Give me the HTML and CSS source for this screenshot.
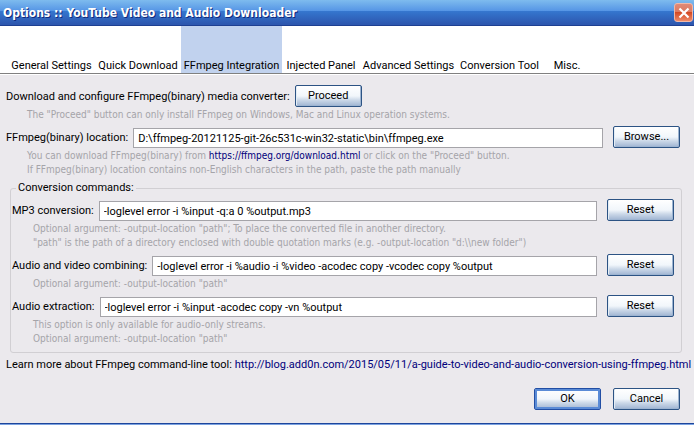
FILE: index.html
```html
<!DOCTYPE html>
<html lang="en">
<head>
<meta charset="utf-8">
<title>Options :: YouTube Video and Audio Downloader</title>
<link rel="stylesheet" href="styles.css">
</head>
<body>
<header class="titlebar">
  <h1 class="title">Options :: YouTube Video and Audio Downloader</h1>
  <button class="close" type="button" aria-label="Close">
    <svg viewBox="0 0 12 12" width="12" height="12" aria-hidden="true"><path d="M1.5 1.5 10.5 10.5M10.5 1.5 1.5 10.5" fill="none" stroke="#fff" stroke-width="2.2"/></svg>
  </button>
</header>
<nav class="tabs">
  <button class="tab" type="button">General Settings</button>
  <button class="tab" type="button">Quick Download</button>
  <button class="tab selected" type="button">FFmpeg Integration</button>
  <button class="tab" type="button">Injected Panel</button>
  <button class="tab" type="button">Advanced Settings</button>
  <button class="tab" type="button">Conversion Tool</button>
  <button class="tab" type="button">Misc.</button>
</nav>
<main class="pane">
  <section class="group">
    <div class="row">
      <span>Download and configure FFmpeg(binary) media converter:</span>
      <button class="button" type="button">Proceed</button>
    </div>
    <p class="hint">The "Proceed" button can only install FFmpeg on Windows, Mac and Linux operation systems.</p>
  </section>
  <section class="group">
    <div class="row">
      <label for="location">FFmpeg(binary) location:</label>
      <input class="field" id="location" type="text" value="D:\ffmpeg-20121125-git-26c531c-win32-static\bin\ffmpeg.exe">
      <button class="button" type="button">Browse...</button>
    </div>
    <p class="hint">You can download FFmpeg(binary) from <a class="link" href="https://ffmpeg.org/download.html">https://ffmpeg.org/download.html</a> or click on the "Proceed" button.</p>
    <p class="hint">If FFmpeg(binary) location contains non-English characters in the path, paste the path manually</p>
  </section>
  <fieldset class="commands">
    <legend class="legend">Conversion commands:</legend>
    <div class="group">
      <div class="row">
        <label for="mp3">MP3 conversion:</label>
        <input class="field" id="mp3" type="text" value="-loglevel error -i %input -q:a 0 %output.mp3">
        <button class="button" type="button">Reset</button>
      </div>
      <p class="hint">Optional argument: -output-location "path"; To place the converted file in another directory.</p>
      <p class="hint">"path" is the path of a directory enclosed with double quotation marks (e.g. -output-location "d:\\new folder")</p>
    </div>
    <div class="group">
      <div class="row">
        <label for="combine">Audio and video combining:</label>
        <input class="field" id="combine" type="text" value="-loglevel error -i %audio -i %video -acodec copy -vcodec copy %output">
        <button class="button" type="button">Reset</button>
      </div>
      <p class="hint">Optional argument: -output-location "path"</p>
    </div>
    <div class="group">
      <div class="row">
        <label for="extract">Audio extraction:</label>
        <input class="field" id="extract" type="text" value="-loglevel error -i %input -acodec copy -vn %output">
        <button class="button" type="button">Reset</button>
      </div>
      <p class="hint">This option is only available for audio-only streams.</p>
      <p class="hint">Optional argument: -output-location "path"</p>
    </div>
  </fieldset>
  <p class="more">Learn more about FFmpeg command-line tool: <a class="link" href="http://blog.add0n.com/2015/05/11/a-guide-to-video-and-audio-conversion-using-ffmpeg.html">http://blog.add0n.com/2015/05/11/a-guide-to-video-and-audio-conversion-using-ffmpeg.html</a></p>
</main>
<footer class="actions">
  <button class="button default" type="button">OK</button>
  <button class="button" type="button">Cancel</button>
</footer>
</body>
</html>
```
FILE: styles.css
```css
* {
  box-sizing: border-box;
}

body {
  margin: 0;
  min-height: 100vh;
  display: flex;
  flex-direction: column;
  background: #ebe9ed;
  color: #000;
  font: 11px/14px Roboto, sans-serif;
  white-space: nowrap;
}

p,
h1 {
  margin: 0;
}

button,
input {
  font: inherit;
  color: inherit;
}

.titlebar {
  display: flex;
  align-items: center;
  justify-content: space-between;
  height: 26px;
  padding: 0 1px 0 3px;
  background: linear-gradient(#7ebbee 0, #5595e5 11px, #3577cf 11px, #2d57af 24px);
  border-bottom: 1px solid #1e3f91;
}

.title {
  color: #fff;
  font: bold 12px/18px "DejaVu Sans Condensed", "DejaVu Sans", sans-serif;
  text-shadow: 1px 1px 0 #102a7c;
}

.close {
  display: flex;
  align-items: center;
  justify-content: center;
  width: 19px;
  height: 19px;
  padding: 0;
  border: 1px solid #f0b8a8;
  border-radius: 3px;
  background: linear-gradient(#e08a78 0, #dc7a62 8px, #d2451f 8px, #ee8a68 100%);
}

.tabs {
  display: grid;
  grid-template-columns: 87px 86px 101px 78px 97px 85px 50px;
  height: 48px;
  padding-left: 8px;
  background: #fff;
  border-bottom: 1px solid #808080;
}

.tab {
  display: flex;
  align-items: flex-end;
  justify-content: center;
  padding: 0;
  border: 0;
  background: none;
}

.selected {
  background: #c1d2ee;
}

.pane {
  padding: 10px 14px 0 6px;
  border-top: 1px solid #fff;
}

.group {
  margin-bottom: 4px;
}

.row {
  display: flex;
  align-items: center;
  gap: 10px;
  margin-bottom: 1px;
}

.row > :first-child {
  margin-right: -5px;
  padding-top: 2px;
}

.field {
  flex: 1;
  min-width: 0;
  height: 20px;
  margin-top: 2px;
  padding: 0 4px;
  border: 1px solid #a5a4a9;
  background: #fff;
}

.button {
  width: 67px;
  height: 22px;
  padding: 0 0 1px;
  border: 1px solid #2c5384;
  border-radius: 2px;
  background: linear-gradient(#fff 0, #f1f6fb 10px, #cbd8e8 14px, #9fb4d2 100%);
  box-shadow: inset 1px 0 #e4edf5, inset -1px -1px #9db4d1;
}

.default {
  border-color: #224ea4;
  box-shadow: inset 0 0 0 2px #5a8bd6;
}

.hint {
  padding-left: 21px;
  color: #a5a4a9;
  font: 10px/14px "DejaVu Sans Condensed", "DejaVu Sans", sans-serif;
}

.link {
  color: #00007b;
  text-decoration: none;
}

.commands {
  min-width: 0;
  margin: 4px -2px 0 4px;
  padding: 4px 7px 2px 1px;
  border: 1px solid #d1cfd3;
  border-radius: 3px;
}

.commands .group {
  margin-bottom: 4px;
}

.legend {
  margin-left: 4px;
  padding: 0 2px;
}

.more {
  margin-top: 5px;
}

.actions {
  display: flex;
  justify-content: flex-end;
  gap: 12px;
  margin-top: auto;
  padding: 0 14px 14px 0;
  border-bottom: 1px solid #7ba2e0;
  box-shadow: inset 0 -1px #1d469c;
}
```
